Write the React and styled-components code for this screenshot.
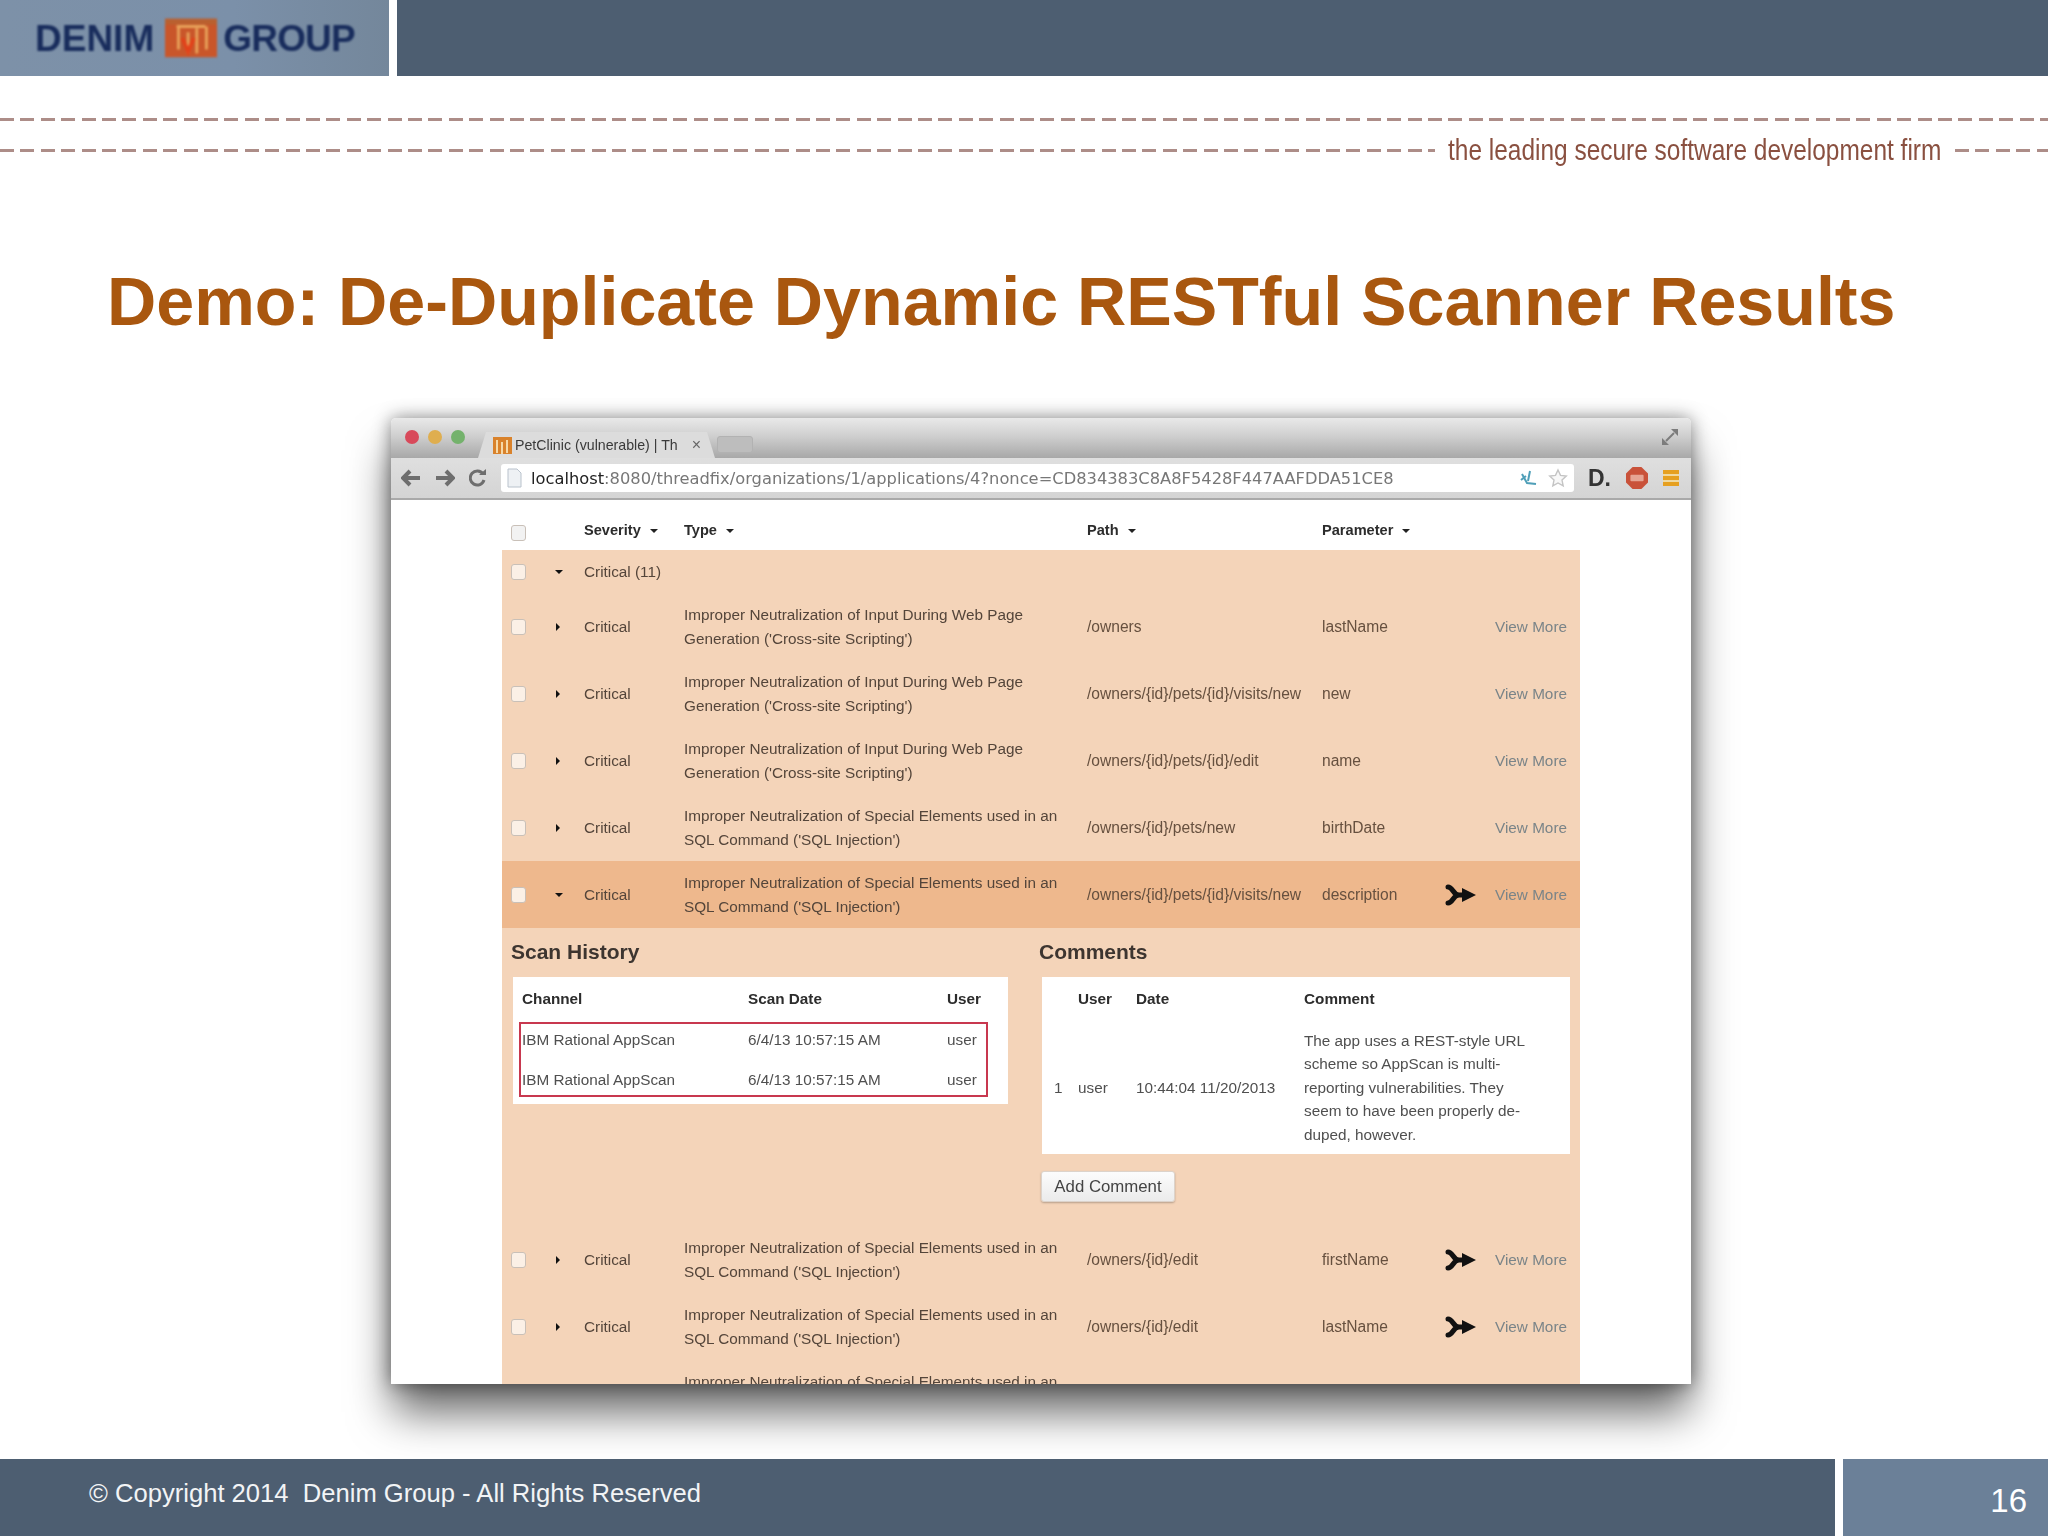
import styled, { createGlobalStyle } from "styled-components";

const GlobalStyle = createGlobalStyle`
    html, body {
        margin: 0;
        padding: 0;
        background: #fff;
    }
    body {
        font-family: "Liberation Sans", Arial, sans-serif;
    }
`;

const xssType = ["Improper Neutralization of Input During Web Page", "Generation ('Cross-site Scripting')"];
const sqlType = ["Improper Neutralization of Special Elements used in an", "SQL Command ('SQL Injection')"];

const rowsTop = [
    { type: xssType, path: "/owners", param: "lastName" },
    { type: xssType, path: "/owners/{id}/pets/{id}/visits/new", param: "new" },
    { type: xssType, path: "/owners/{id}/pets/{id}/edit", param: "name" },
    { type: sqlType, path: "/owners/{id}/pets/new", param: "birthDate" },
    { type: sqlType, path: "/owners/{id}/pets/{id}/visits/new", param: "description", merged: true, open: true },
];

const rowsBottom = [
    { type: sqlType, path: "/owners/{id}/edit", param: "firstName", merged: true },
    { type: sqlType, path: "/owners/{id}/edit", param: "lastName", merged: true },
];

const LogoMark = () => (
    <svg width="52" height="40" viewBox="0 0 54 40">
        <rect x="0" y="0" width="54" height="40" fill="#c9562a" />
        <rect x="0" y="0" width="54" height="6" fill="#b9602f" />
        <path d="M12 8h30M14 8v24M24 14v22M33 10v26M43 8v24" stroke="#e8a25a" strokeWidth="3" fill="none" />
        <path d="M18 20l6 14 6-14" stroke="#e2421a" strokeWidth="4" fill="none" />
    </svg>
);

const MergeIcon = () => (
    <svg width="32" height="22" viewBox="0 0 32 22">
        <path d="M3 3c5 0 5 8 11 8M3 19c5 0 5-8 11-8h6" stroke="#111" strokeWidth="5" fill="none" strokeLinecap="round" />
        <path d="M17 4l14 7-14 7z" fill="#111" />
    </svg>
);

const FavIcon = () => (
    <svg width="19" height="17" viewBox="0 0 19 17">
        <rect width="19" height="17" fill="#d9822b" />
        <path d="M4 3v13M9 5v12M14 3v13" stroke="#f6d9a8" strokeWidth="2" />
    </svg>
);

const BackIcon = ({ flip }) => (
    <svg width="20" height="18" viewBox="0 0 20 18" style={flip ? { transform: "scaleX(-1)" } : undefined}>
        <path d="M9 2L2 9l7 7M2 9h17" stroke="#6e6e6e" strokeWidth="4" fill="none" />
    </svg>
);

const ReloadIcon = () => (
    <svg width="18" height="18" viewBox="0 0 18 18">
        <path d="M14 5a7 7 0 1 0 1 6" stroke="#6e6e6e" strokeWidth="3" fill="none" />
        <path d="M10 6h7V0z" fill="#6e6e6e" />
    </svg>
);

const PageIcon = () => (
    <svg width="15" height="20" viewBox="0 0 15 20">
        <path d="M1 1h9l4 4v14H1z" fill="#eef1f4" stroke="#b9c2cc" />
    </svg>
);

const ExpandIcon = () => (
    <svg width="18" height="18" viewBox="0 0 18 18">
        <path d="M10 1h7v7zM1 10v7h7z" fill="#7c7c7c" />
        <path d="M13 5l-8 8" stroke="#7c7c7c" strokeWidth="2" />
    </svg>
);

const ExtensionGlyph = () => (
    <svg width="20" height="20" viewBox="0 0 20 20">
        <path d="M3 6l5 9 9 1M11 3l-2 10M2 12l5-4" stroke="#4f9fb8" strokeWidth="2" fill="none" />
    </svg>
);

const StarIcon = () => (
    <svg width="20" height="20" viewBox="0 0 20 20">
        <path d="M10 2l2.5 5.4 5.8.7-4.3 4 1.2 5.8L10 15l-5.2 2.9L6 12.1l-4.3-4 5.8-.7z" fill="#f8f8f8" stroke="#c4c4c4" strokeWidth="1.4" />
    </svg>
);

const AdBlockIcon = () => (
    <svg width="22" height="22" viewBox="0 0 20 20">
        <path d="M6 0h8l6 6v8l-6 6H6l-6-6V6z" fill="#c9523a" />
        <rect x="4" y="7" width="12" height="6" rx="1" fill="#e6a594" />
    </svg>
);

const Row = ({ row }) => (
    <TableRow $open={row.open}>
        <Checkbox />
        <Caret $down={row.open} />
        <Cell>Critical</Cell>
        <Cell>
            {row.type[0]}
            <br />
            {row.type[1]}
        </Cell>
        <PathCell>{row.path}</PathCell>
        <PathCell>{row.param}</PathCell>
        <IconCell>{row.merged && <MergeIcon />}</IconCell>
        <ViewMore>View More</ViewMore>
    </TableRow>
);

export default function App() {
    return (
        <Page>
            <GlobalStyle />
            <TopBar>
                <LogoBlock>
                    <LogoInner>
                        <LogoWord>DENIM</LogoWord>
                        <LogoMark />
                        <LogoWord $tight>GROUP</LogoWord>
                    </LogoInner>
                </LogoBlock>
                <TopFill />
            </TopBar>
            <DashArea>
                <DashLine />
                <TaglineRow>
                    <DashLine />
                    <Tagline>the leading secure software development firm</Tagline>
                    <DashEnd />
                </TaglineRow>
            </DashArea>
            <Title>Demo: De-Duplicate Dynamic RESTful Scanner Results</Title>
            <Stage>
                <BrowserWindow>
                    <TabStrip>
                        <Light $color="#d8495a" />
                        <Light $color="#dfae4f" />
                        <Light $color="#74b26c" />
                        <Tab>
                            <FavIcon />
                            <TabTitle>PetClinic (vulnerable) | Th</TabTitle>
                            <TabClose>×</TabClose>
                        </Tab>
                        <NewTab />
                        <ExpandSlot>
                            <ExpandIcon />
                        </ExpandSlot>
                    </TabStrip>
                    <Toolbar>
                        <BackIcon />
                        <BackIcon flip />
                        <ReloadIcon />
                        <AddressBar>
                            <PageIcon />
                            <Url>
                                <UrlHost>localhost</UrlHost>:8080/threadfix/organizations/1/applications/4?nonce=CD834383C8A8F5428F447AAFDDA51CE8
                            </Url>
                            <ExtensionGlyph />
                            <StarIcon />
                        </AddressBar>
                        <DLogo>D.</DLogo>
                        <AdBlockIcon />
                        <MenuIcon />
                    </Toolbar>
                    <Content>
                        <Table>
                            <HeaderRow>
                                <Checkbox $plain />
                                <span />
                                <HeadLabel>
                                    Severity <SmallCaret />
                                </HeadLabel>
                                <HeadLabel>
                                    Type <SmallCaret />
                                </HeadLabel>
                                <HeadLabel>
                                    Path <SmallCaret />
                                </HeadLabel>
                                <HeadLabel>
                                    Parameter <SmallCaret />
                                </HeadLabel>
                            </HeaderRow>
                            <Peach>
                                <GroupRow>
                                    <Checkbox />
                                    <Caret $down />
                                    <Cell>Critical (11)</Cell>
                                </GroupRow>
                                {rowsTop.map((row, i) => (
                                    <Row key={i} row={row} />
                                ))}
                                <Expanded>
                                    <ScanPane>
                                        <PaneHeading>Scan History</PaneHeading>
                                        <ScanCard>
                                            <ScanHead>
                                                <b>Channel</b>
                                                <b>Scan Date</b>
                                                <b>User</b>
                                            </ScanHead>
                                            <RedBox>
                                                <ScanRow>
                                                    <span>IBM Rational AppScan</span>
                                                    <span>6/4/13 10:57:15 AM</span>
                                                    <span>user</span>
                                                </ScanRow>
                                                <ScanRow>
                                                    <span>IBM Rational AppScan</span>
                                                    <span>6/4/13 10:57:15 AM</span>
                                                    <span>user</span>
                                                </ScanRow>
                                            </RedBox>
                                        </ScanCard>
                                    </ScanPane>
                                    <CommentPane>
                                        <PaneHeading>Comments</PaneHeading>
                                        <CommentCard>
                                            <CommentHead>
                                                <span />
                                                <b>User</b>
                                                <b>Date</b>
                                                <b>Comment</b>
                                            </CommentHead>
                                            <CommentBody>
                                                <span>1</span>
                                                <span>user</span>
                                                <span>10:44:04 11/20/2013</span>
                                                <span>
                                                    The app uses a REST-style URL
                                                    <br />
                                                    scheme so AppScan is multi-
                                                    <br />
                                                    reporting vulnerabilities. They
                                                    <br />
                                                    seem to have been properly de-
                                                    <br />
                                                    duped, however.
                                                </span>
                                            </CommentBody>
                                        </CommentCard>
                                        <AddButton>Add Comment</AddButton>
                                    </CommentPane>
                                </Expanded>
                                {rowsBottom.map((row, i) => (
                                    <Row key={i} row={row} />
                                ))}
                                <ClippedRow>
                                    <ClippedText>Improper Neutralization of Special Elements used in an</ClippedText>
                                </ClippedRow>
                            </Peach>
                        </Table>
                    </Content>
                </BrowserWindow>
            </Stage>
            <Footer>
                <FooterText>© Copyright 2014&nbsp; Denim Group - All Rights Reserved</FooterText>
                <PageNumber>16</PageNumber>
            </Footer>
        </Page>
    );
}

const Page = styled.div`
    width: 2048px;
    height: 1536px;
    display: flex;
    flex-direction: column;
    overflow: hidden;
    background: #fff;
`;

const TopBar = styled.div`
    display: flex;
    height: 76px;
    gap: 8px;
    flex: none;
`;

const LogoBlock = styled.div`
    width: 389px;
    display: flex;
    align-items: center;
    padding-left: 35px;
    box-sizing: border-box;
    background: linear-gradient(90deg, #7d91a8 0%, #7b90a9 60%, #74879b 100%);
`;

const LogoInner = styled.div`
    display: flex;
    align-items: center;
    gap: 11px;
    filter: blur(0.9px);
`;

const LogoWord = styled.span`
    font-size: 37px;
    font-weight: 700;
    letter-spacing: ${(p) => (p.$tight ? "-0.8px" : "0")};
    margin-left: ${(p) => (p.$tight ? "-5px" : "0")};
    color: #182c5c;
    line-height: 1;
`;

const TopFill = styled.div`
    flex: 1;
    background: #4d5e71;
`;

const DashArea = styled.div`
    height: 114px;
    flex: none;
    padding-top: 42px;
    box-sizing: border-box;
    filter: blur(0.5px);
`;

const DashLine = styled.div`
    height: 3px;
    flex: 1;
    background: repeating-linear-gradient(90deg, #ad8d88 0 14px, transparent 14px 20.4px);
`;

const DashEnd = styled(DashLine)`
    flex: none;
    width: 93px;
`;

const TaglineRow = styled.div`
    display: flex;
    align-items: center;
    height: 30px;
    margin-top: 14px;
    gap: 13px;
`;

const Tagline = styled.div`
    width: 494px;
    flex: none;
    font-size: 30px;
    line-height: 30px;
    color: #8a5040;
    white-space: nowrap;
    transform: scaleX(0.815);
    transform-origin: left center;
`;

const Title = styled.h1`
    margin: 0;
    padding: 75px 0 0 107px;
    height: 99px;
    box-sizing: content-box;
    font-size: 68.2px;
    line-height: 72px;
    font-weight: 700;
    color: #a9570f;
    white-space: nowrap;
    flex: none;
`;

const Stage = styled.div`
    height: 966px;
    margin-top: 54px;
    flex: none;
    padding-left: 391px;
`;

const BrowserWindow = styled.div`
    width: 1300px;
    height: 966px;
    display: flex;
    flex-direction: column;
    overflow: hidden;
    background: #fff;
    border-radius: 5px 5px 0 0;
    box-shadow: 0 30px 44px -2px rgba(0, 0, 0, 0.6), 0 0 18px rgba(0, 0, 0, 0.45);
`;

const TabStrip = styled.div`
    height: 40px;
    flex: none;
    display: flex;
    align-items: flex-end;
    position: relative;
    padding-left: 14px;
    box-sizing: border-box;
    background: linear-gradient(180deg, #e9e9e9 0%, #cfcfcf 45%, #a8a8a8 100%);
    filter: blur(0.7px);
`;

const Light = styled.span`
    width: 14px;
    height: 14px;
    border-radius: 50%;
    margin: 0 9px 14px 0;
    flex: none;
    background: ${(p) => p.$color};
`;

const Tab = styled.div`
    width: 237px;
    height: 26px;
    margin-left: 4px;
    display: flex;
    align-items: center;
    gap: 3px;
    padding: 0 14px 0 15px;
    box-sizing: border-box;
    background: #dcdcdc;
    clip-path: polygon(8px 0, calc(100% - 8px) 0, 100% 100%, 0 100%);
`;

const TabTitle = styled.span`
    font-size: 14.2px;
    color: #3a3a3a;
    white-space: nowrap;
    flex: 1;
`;

const TabClose = styled.span`
    font-size: 16px;
    color: #666;
`;

const NewTab = styled.div`
    width: 34px;
    height: 15px;
    margin: 0 0 5px 2px;
    border-radius: 3px;
    background: #bdbdbd;
    border: 1px solid #b2b2b2;
`;

const ExpandSlot = styled.div`
    position: absolute;
    right: 12px;
    top: 10px;
`;

const Toolbar = styled.div`
    height: 42px;
    flex: none;
    display: flex;
    align-items: center;
    gap: 14px;
    padding-left: 10px;
    box-sizing: border-box;
    background: linear-gradient(180deg, #dfdfdf 0%, #d4d4d4 100%);
    border-bottom: 2px solid #a9a9a9;
    filter: blur(0.6px);
`;

const AddressBar = styled.div`
    width: 1073px;
    height: 28px;
    display: flex;
    align-items: center;
    gap: 9px;
    padding: 0 6px;
    box-sizing: border-box;
    background: #fff;
    border-radius: 3px;
`;

const Url = styled.span`
    flex: 1;
    font-family: "DejaVu Sans", sans-serif;
    font-size: 16.3px;
    color: #777;
    white-space: nowrap;
`;

const UrlHost = styled.span`
    color: #222;
`;

const DLogo = styled.span`
    font-size: 23px;
    font-weight: 700;
    color: #333;
    margin-right: 1px;
`;

const MenuIcon = styled.span`
    width: 16px;
    height: 16px;
    margin-left: 1px;
    flex: none;
    background: repeating-linear-gradient(180deg, #e6a020 0 4px, #f0d9a0 4px 6px);
`;

const Content = styled.div`
    flex: 1;
    min-height: 0;
    overflow: hidden;
    padding-left: 111px;
    filter: blur(0.75px);
`;

const Table = styled.div`
    width: 1078px;
`;

const gridColumns = "52px 30px 100px 403px 235px 123px 50px 85px";

const HeaderRow = styled.div`
    height: 50px;
    display: grid;
    grid-template-columns: ${gridColumns};
    align-items: center;
    font-size: 14.6px;
    padding-top: 12px;
    box-sizing: border-box;
`;

const HeadLabel = styled.span`
    font-weight: 700;
    color: #2c2c2c;
    margin-top: -3px;
`;

const SmallCaret = styled.i`
    display: inline-block;
    margin-left: 5px;
    vertical-align: middle;
    border-left: 4px solid transparent;
    border-right: 4px solid transparent;
    border-top: 4px solid #222;
`;

const Peach = styled.div`
    background: #f4d4b9;
`;

const TableRow = styled.div`
    height: 67px;
    display: grid;
    grid-template-columns: ${gridColumns};
    align-items: center;
    font-size: 15.3px;
    line-height: 23.5px;
    color: #54453a;
    background: ${(p) => (p.$open ? "#eeb88d" : "transparent")};
`;

const GroupRow = styled(TableRow)`
    height: 43px;
`;

const ClippedRow = styled(TableRow)`
    align-items: start;
    padding-top: 10px;
    box-sizing: border-box;
`;

const Checkbox = styled.span`
    width: 13px;
    height: 14px;
    margin: ${(p) => (p.$plain ? "4px 0 0 9px" : "0 0 0 9px")};
    border-radius: 3px;
    background: ${(p) => (p.$plain ? "#f2f2f2" : "#fbf0e6")};
    border: 1px solid #c9c0b8;
`;

const Caret = styled.span`
    width: 0;
    height: 0;
    margin-left: ${(p) => (p.$down ? "1px" : "2px")};
    border-style: solid;
    border-color: transparent;
    border-width: ${(p) => (p.$down ? "4px 4px 0 4px" : "4px 0 4px 4px")};
    ${(p) => (p.$down ? "border-top-color: #111;" : "border-left-color: #111;")}
`;

const Cell = styled.span`
    white-space: nowrap;
`;

const ClippedText = styled(Cell)`
    grid-column: 4;
`;

const PathCell = styled(Cell)`
    font-size: 15.6px;
    color: #66503f;
`;

const IconCell = styled.span`
    display: flex;
    align-items: center;
`;

const ViewMore = styled(Cell)`
    color: #7a8488;
`;

const Expanded = styled.div`
    height: 298px;
    display: flex;
    color: #4f4f4f;
    font-size: 15.3px;
`;

const PaneHeading = styled.h3`
    margin: 0;
    height: 49px;
    font-size: 21px;
    line-height: 47px;
    font-weight: 700;
    color: #3d3530;
`;

const ScanPane = styled.div`
    width: 537px;
    padding-left: 9px;
    box-sizing: border-box;
`;

const ScanCard = styled.div`
    width: 495px;
    height: 127px;
    margin-left: 2px;
    background: #fff;
    padding-left: 6px;
    box-sizing: border-box;
`;

const scanColumns = "226px 199px 40px";

const ScanHead = styled.div`
    height: 43px;
    margin-bottom: 2px;
    display: grid;
    grid-template-columns: ${scanColumns};
    align-items: center;
    padding-left: 3px;
    color: #2c2c2c;
`;

const RedBox = styled.div`
    width: 469px;
    height: 75px;
    box-sizing: border-box;
    border: 2px solid #c8384f;
    display: flex;
    flex-direction: column;
    gap: 11px;
    padding: 1px 0 0 1px;
`;

const ScanRow = styled.div`
    height: 30px;
    display: grid;
    grid-template-columns: ${scanColumns};
    align-items: center;
`;

const CommentPane = styled.div`
    width: 531px;
`;

const CommentCard = styled.div`
    width: 528px;
    height: 177px;
    margin-left: 3px;
    background: #fff;
`;

const commentColumns = "36px 58px 168px 1fr";

const CommentHead = styled.div`
    height: 43px;
    display: grid;
    grid-template-columns: ${commentColumns};
    align-items: center;
    color: #2c2c2c;
`;

const CommentBody = styled.div`
    display: grid;
    grid-template-columns: ${commentColumns};
    align-items: center;
    line-height: 23.4px;
    white-space: nowrap;
    padding-top: 9px;

    & > span:first-child {
        padding-left: 12px;
    }
`;

const AddButton = styled.button`
    display: block;
    width: 134px;
    height: 31px;
    margin: 17px 0 0 2px;
    padding: 0;
    border: 1px solid #dcd3cb;
    border-radius: 3px;
    background: linear-gradient(180deg, #fcfcfc, #ebebeb);
    box-shadow: 0 1px 2px rgba(0, 0, 0, 0.25);
    font-family: inherit;
    font-size: 16.8px;
    color: #444;
`;

const Footer = styled.div`
    margin-top: auto;
    height: 77px;
    flex: none;
    display: flex;
    gap: 8px;
`;

const FooterText = styled.div`
    flex: 1;
    background: #4d5e71;
    color: #f2f4f6;
    font-size: 25.6px;
    padding: 20px 0 0 89px;
    box-sizing: border-box;
`;

const PageNumber = styled.div`
    width: 205px;
    background: #6b8098;
    color: #fff;
    font-size: 33px;
    text-align: right;
    padding: 23px 21px 0 0;
    box-sizing: border-box;
`;
